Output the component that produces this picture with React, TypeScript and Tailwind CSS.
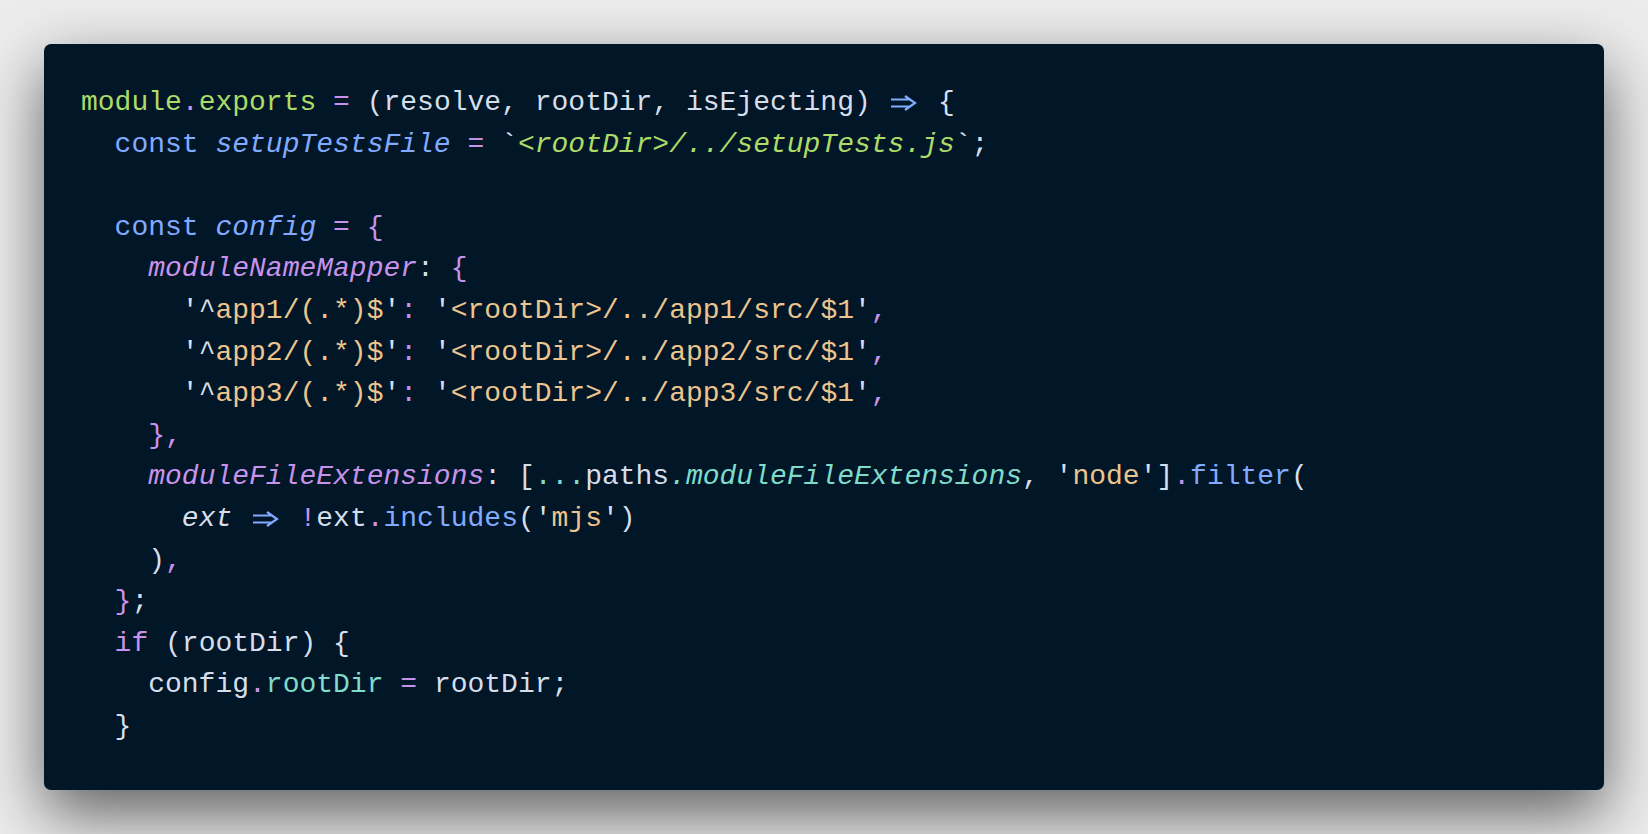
type Tok = [string, string]

const g = 'text-[#addb67]'
const p = 'text-[#c792ea]'
const b = 'text-[#82aaff]'
const t = 'text-[#7fdbca]'
const s = 'text-[#ecc48d]'
const w = 'text-[#d6deeb]'
const ARROW = '=>'

function Arrow() {
    return (
        <span className="inline-block w-[33.6px] text-center text-[#82aaff]">
            <svg width="30" height="18" viewBox="0 0 30 18" className="inline-block align-middle" fill="none" stroke="currentColor" strokeWidth="2.2" strokeLinecap="butt" strokeLinejoin="miter">
                <path d="M2 5.5H21M2 12.5H21M16 2L26 9L16 16" />
            </svg>
        </span>
    )
}

const regex = (n: string): Tok[] => [
    ['      ', w],
    ["'^", w],
    [`app${n}/(.*)$`, s],
    ["'", w],
    [':', p],
    [' ', w],
    ["'", w],
    [`<rootDir>/../app${n}/src/$1`, s],
    ["'", w],
    [',', p],
]

const lines: Tok[][] = [
    [
        ['module', g], ['.', p], ['exports', g], [' ', w], ['=', p],
        [' (resolve, rootDir, isEjecting) ', w], [ARROW, b], [' {', w],
    ],
    [
        ['  ', w], ['const', b], [' ', w], ['setupTestsFile', b + ' italic'], [' ', w], ['=', p],
        [' `', w], ['<rootDir>/../setupTests.js', g + ' italic'], ['`;', w],
    ],
    [],
    [['  ', w], ['const', b], [' ', w], ['config', b + ' italic'], [' ', w], ['=', p], [' ', w], ['{', p]],
    [['    ', w], ['moduleNameMapper', p + ' italic'], [': ', w], ['{', p]],
    regex('1'),
    regex('2'),
    regex('3'),
    [['    ', w], ['},', p]],
    [
        ['    ', w], ['moduleFileExtensions', p + ' italic'], [': [', w], ['...', t], ['paths', w],
        ['.moduleFileExtensions', t + ' italic'], [', ', w], ["'", w], ['node', s], ["'", w], [']', w],
        ['.', p], ['filter', b], ['(', w],
    ],
    [
        ['      ', w], ['ext', w + ' italic'], [' ', w], [ARROW, b], [' ', w], ['!', p], ['ext', w],
        ['.', p], ['includes', b], ['(', w], ["'", w], ['mjs', s], ["'", w], [')', w],
    ],
    [['    ', w], [')', w], [',', p]],
    [['  ', w], ['}', p], [';', w]],
    [['  ', w], ['if', p], [' (rootDir) {', w]],
    [['    config', w], ['.', p], ['rootDir', t], [' ', w], ['=', p], [' rootDir;', w]],
    [['  }', w]],
]

export default function App() {
    return (
        <div className="w-full h-[834px] bg-[#ececec] p-[44px] flex">
            <div className="flex-1 rounded-[7px] bg-[#011627] shadow-[0_24px_64px_rgba(0,0,0,0.6)] pt-[38px] pl-[37px] pb-[43px]">
                <pre className="font-['Liberation_Mono',monospace] text-[28px] leading-[41.6px] text-[#d6deeb] whitespace-pre">
                    {lines.map((line, i) => (
                        <div key={i} className="h-[41.6px]">
                            {line.map(([txt, cls], j) =>
                                txt === ARROW ? (
                                    <Arrow key={j} />
                                ) : (
                                    <span key={j} className={cls}>
                                        {txt}
                                    </span>
                                )
                            )}
                        </div>
                    ))}
                </pre>
            </div>
        </div>
    )
}
